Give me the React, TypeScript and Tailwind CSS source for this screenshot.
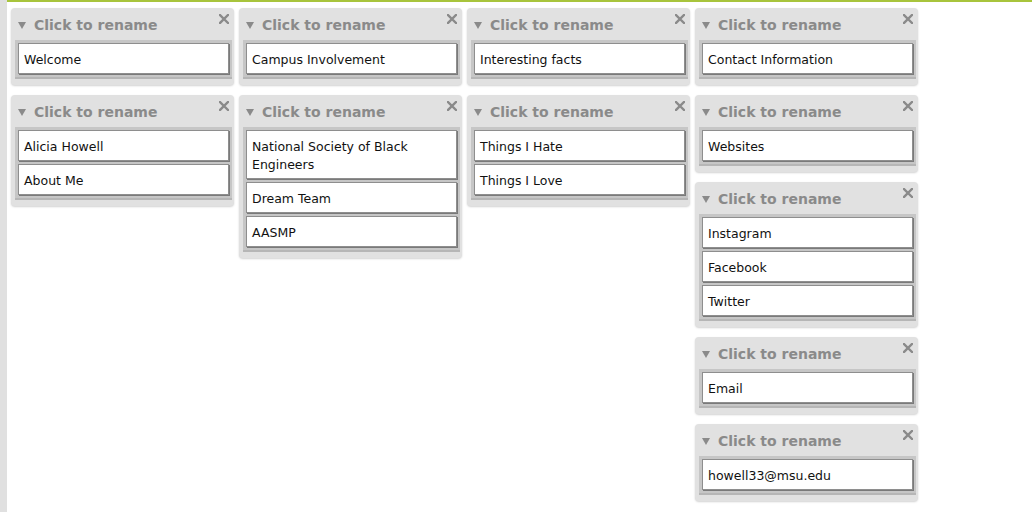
type Box = { items: string[] };

const columns: Box[][] = [
  [{ items: ["Welcome"] }, { items: ["Alicia Howell", "About Me"] }],
  [
    { items: ["Campus Involvement"] },
    { items: ["National Society of Black Engineers", "Dream Team", "AASMP"] },
  ],
  [{ items: ["Interesting facts"] }, { items: ["Things I Hate", "Things I Love"] }],
  [
    { items: ["Contact Information"] },
    { items: ["Websites"] },
    { items: ["Instagram", "Facebook", "Twitter"] },
    { items: ["Email"] },
    { items: ["howell33@msu.edu"] },
  ],
];

function CloseIcon() {
  return (
    <svg viewBox="0 0 10 10" className="h-[10px] w-[10px]" aria-hidden="true">
      <path d="M1 1 9 9M9 1 1 9" stroke="#8a8a8a" strokeWidth="2.4" strokeLinecap="square" />
    </svg>
  );
}

function Card({ items }: Box) {
  return (
    <div className="relative w-[223px] rounded-[4px] bg-[#e1e1e1] pb-[6px] pl-[4px] pr-[2px] shadow-[0_1px_2px_rgba(0,0,0,0.18)]">
      <div className="flex h-[32px] items-center pl-[3px] pt-[2px]">
        <span className="mr-[8px] h-0 w-0 border-l-[4.5px] border-r-[4.5px] border-t-[7px] border-l-transparent border-r-transparent border-t-[#8a8a8a]" />
        <span className="text-[14px] font-bold text-[#8a8a8a]">Click to rename</span>
      </div>
      <div className="absolute right-[5px] top-[6px]">
        <CloseIcon />
      </div>
      <div className="flex flex-col gap-[3px] bg-[#c6c6c6] px-[3px] pb-[5px] pt-[3px] shadow-[inset_0_-2px_0_#b6b6b6]">
        {items.map((t) => (
          <div
            key={t}
            className="border border-[#8e8e8e] bg-white pb-[4px] pl-[5px] pr-[6px] pt-[7px] text-[12.5px] leading-[18px] text-[#111] shadow-[1px_1px_0_#7a7a7a]"
          >
            {t}
          </div>
        ))}
      </div>
    </div>
  );
}

export default function App() {
  return (
    <div className="flex h-[512px] w-[1032px] overflow-hidden bg-white font-['DejaVu_Sans',Verdana,sans-serif]">
      <div className="w-[7px] shrink-0 bg-[#e0e0e0]" />
      <div className="flex-1 border-t-2 border-[#a8c43c]">
        <div className="flex gap-[5px] pl-[4px] pt-[6px]">
          {columns.map((col, i) => (
            <div key={i} className="flex flex-col gap-[10px]">
              {col.map((b, j) => (
                <Card key={j} items={b.items} />
              ))}
            </div>
          ))}
        </div>
      </div>
    </div>
  );
}
